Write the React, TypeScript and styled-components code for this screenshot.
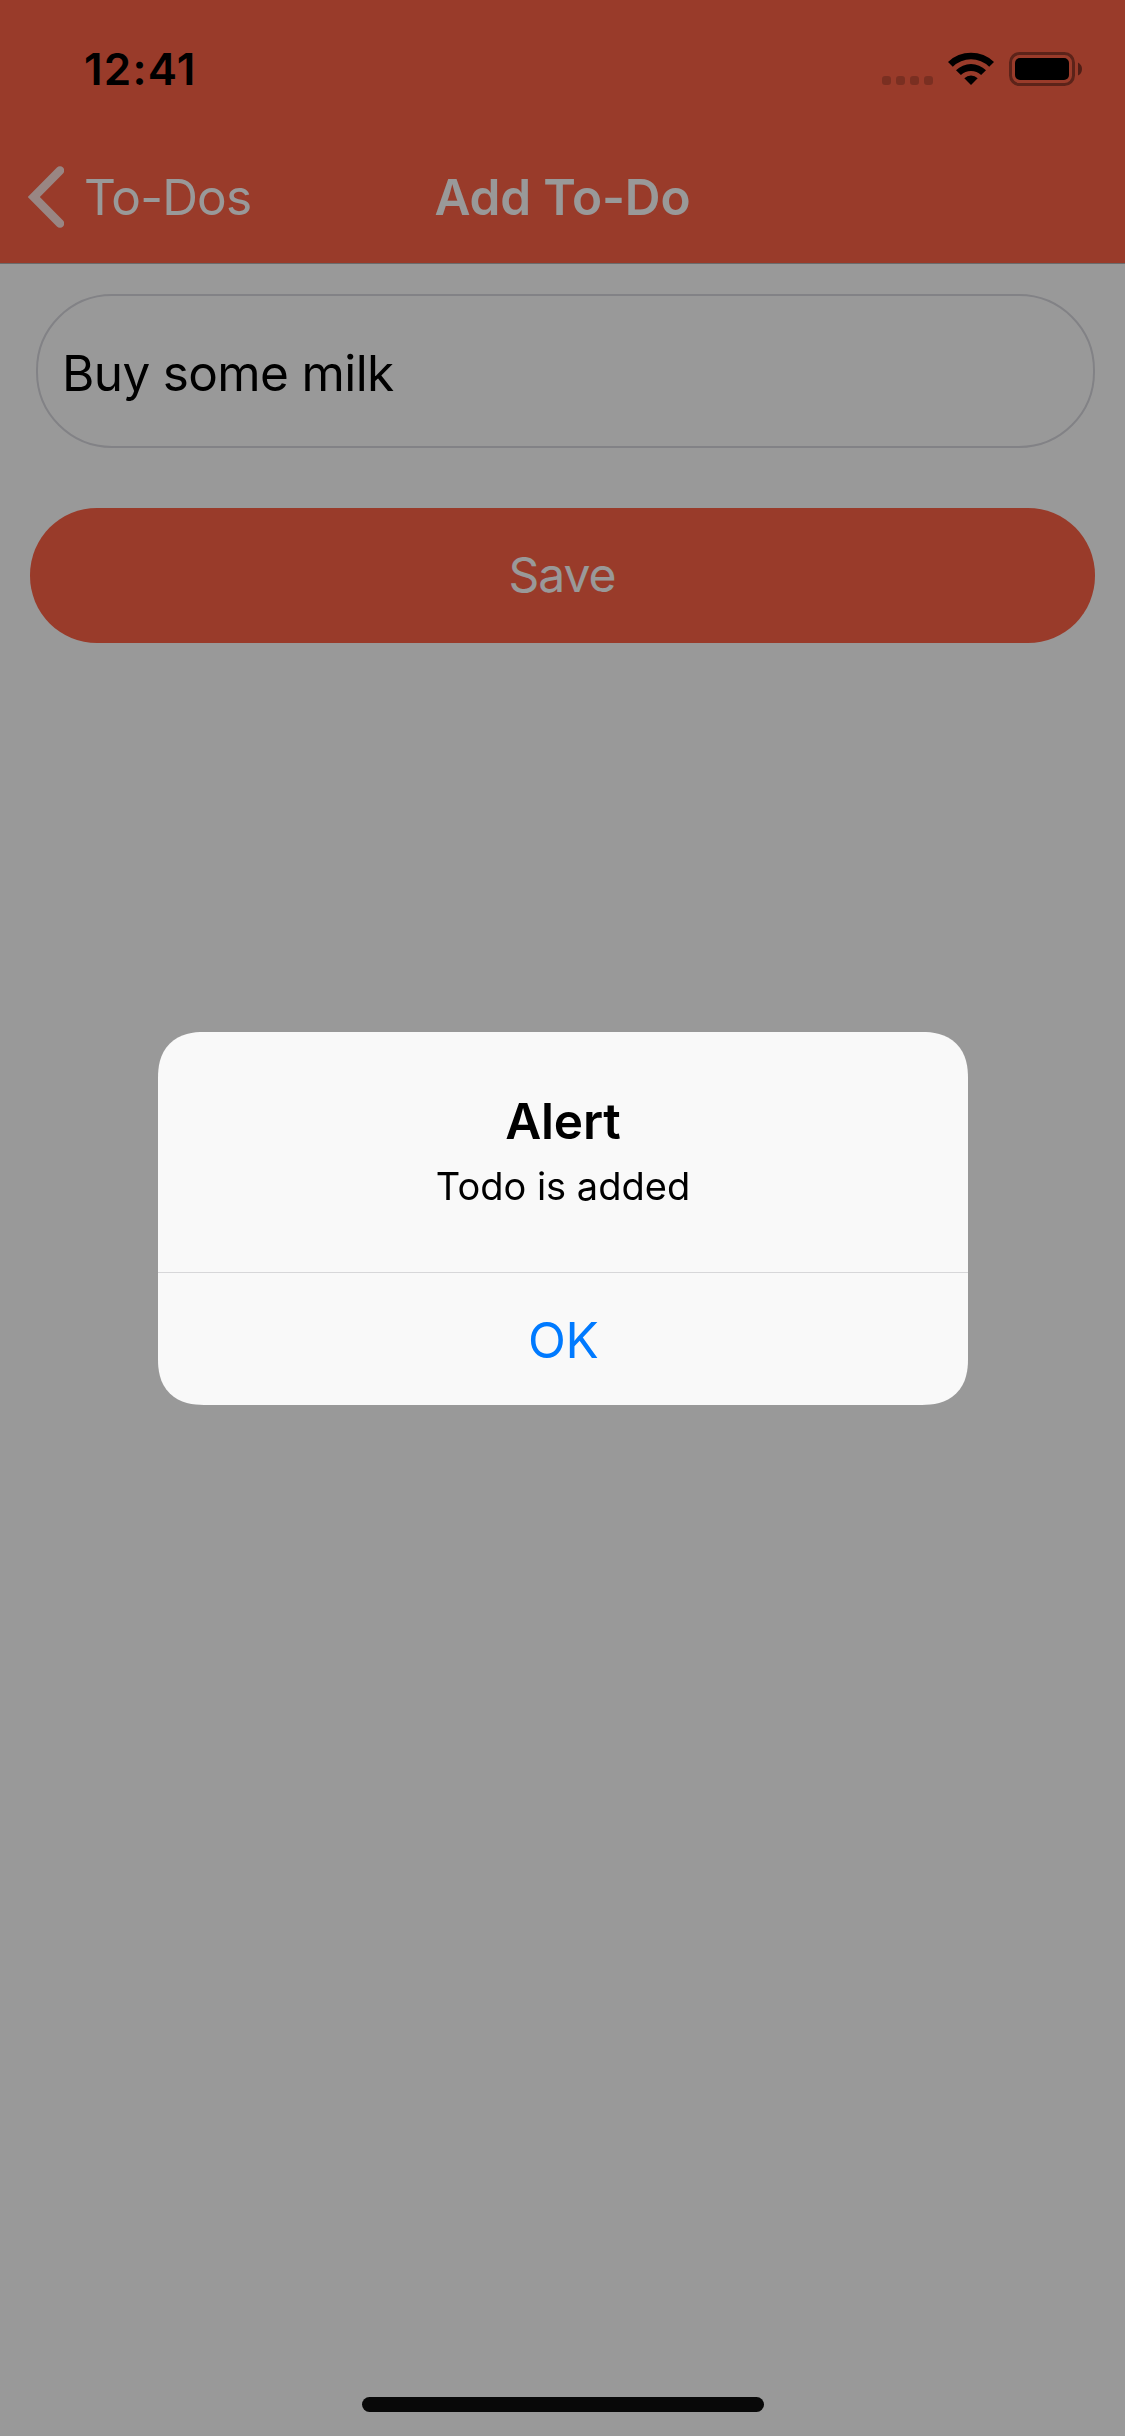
import React from "react";
import styled, { createGlobalStyle } from "styled-components";

const GlobalStyle = createGlobalStyle`
  *, *::before, *::after { box-sizing: border-box; }
  body {
    margin: 0;
    background: #fff;
    font-family: Inter, "Liberation Sans", sans-serif;
  }
  button, input { font-family: inherit; }
`;

const TOMATO = "#ff6347";

const Label = styled.span<{ $size: number; $track?: number; $weight?: number }>`
  font-size: ${(p) => p.$size}px;
  font-weight: ${(p) => p.$weight ?? 400};
  letter-spacing: ${(p) => p.$track ?? 0}px;
  margin-right: ${(p) => -(p.$track ?? 0)}px;
  line-height: 60px;
  white-space: nowrap;
`;

const Screen = styled.div`
  display: flex;
  flex-direction: column;
  width: 1125px;
  height: 2436px;
  background: #fff;
`;

const Header = styled.header`
  display: flex;
  flex-direction: column;
  height: 264px;
  background: ${TOMATO};
  border-bottom: 1px solid #b2b2b2;
`;

const StatusBar = styled.div`
  display: flex;
  justify-content: space-between;
  height: 132px;
  padding: 39px 43px 0 84px;
  color: #000;
`;

const StatusIcons = styled.div`
  display: flex;
  align-items: flex-start;
  padding-top: 13px;
`;

const SignalDots = styled.div`
  display: flex;
  gap: 5px;
  margin: 24px 15px 0 0;
`;

const Dot = styled.i`
  width: 9px;
  height: 9px;
  border-radius: 3px;
  background: rgba(0, 0, 0, 0.2);
`;

const WifiIcon = styled.svg`
  width: 46px;
  height: 34px;
  margin-right: 15px;
`;

const BatteryIcon = styled.svg`
  width: 73px;
  height: 34px;
`;

const NavBar = styled.nav`
  display: grid;
  grid-template-columns: 1fr auto 1fr;
  align-items: center;
  height: 131px;
  padding-bottom: 1px;
  color: #fff;
`;

const BackButton = styled.button`
  display: flex;
  align-items: center;
  gap: 20px;
  padding: 0 0 0 28px;
  border: 0;
  background: none;
  color: inherit;
`;

const Chevron = styled.svg`
  width: 36px;
  height: 62px;
`;

const Form = styled.form`
  display: flex;
  flex-direction: column;
  padding: 30px 30px 0;
`;

const TextField = styled.input`
  height: 154px;
  margin-left: 6px;
  padding: 3px 24px 0;
  border: 2px solid #d9d9df;
  border-radius: 76px;
  outline: none;
  background: transparent;
  color: #000;
  font-size: 49.5px;
  letter-spacing: -0.64px;
`;

const SaveButton = styled.button`
  display: flex;
  align-items: center;
  justify-content: center;
  height: 135px;
  margin-top: 60px;
  padding: 0 0 1px;
  border: 0;
  border-radius: 67px;
  background: ${TOMATO};
  color: #fff;
`;

const Backdrop = styled.div`
  position: fixed;
  inset: 0;
  display: flex;
  flex-direction: column;
  align-items: center;
  width: 1125px;
  height: 2436px;
  padding: 1032px 0 24px;
  background: rgba(0, 0, 0, 0.4);
`;

const Dialog = styled.div`
  display: flex;
  flex-direction: column;
  width: 810px;
  height: 373px;
  margin-left: 1px;
  border-radius: 46px;
  corner-shape: superellipse(1.25);
  background: #f9f9f9;
  color: #000;
`;

const DialogText = styled.div`
  display: flex;
  flex-direction: column;
  align-items: center;
  gap: 5px;
  height: 240px;
  padding-top: 59px;
`;

const DialogButton = styled.button`
  display: flex;
  align-items: center;
  justify-content: center;
  height: 133px;
  padding: 1px 0 0 1px;
  border: 0;
  border-top: 1px solid #d7d7d9;
  background: none;
  color: #007aff;
`;

const HomeIndicator = styled.div`
  width: 402px;
  height: 15px;
  margin: auto 0 0 1px;
  border-radius: 8px;
  background: #080808;
`;

export default function App() {
  return (
    <>
      <GlobalStyle />
      <Screen>
        <Header>
          <StatusBar>
            <Label $size={44} $weight={600} $track={1.2}>12:41</Label>
            <StatusIcons>
              <SignalDots>
                <Dot />
                <Dot />
                <Dot />
                <Dot />
              </SignalDots>
              <WifiIcon viewBox="0 0 46 34">
                <path d="M0 10A33 33 0 0 1 46 10L41.2 14.8A26 26 0 0 0 4.8 14.8Z" />
                <path d="M8 18.2A21.5 21.5 0 0 1 38 18.2L33.1 23A14.6 14.6 0 0 0 12.9 23Z" />
                <path d="M16.3 26.2A10 10 0 0 1 29.7 26.2L23 33Z" />
              </WifiIcon>
              <BatteryIcon viewBox="0 0 73 34">
                <rect x="1.5" y="1.5" width="63" height="31" rx="9" fill="none" stroke="#000" strokeOpacity="0.4" strokeWidth="3" />
                <rect x="6" y="6" width="54" height="22" rx="5" />
                <path d="M69 10.4C71.6 11.6 73 14.2 73 17S71.6 22.4 69 23.6Z" fillOpacity="0.48" />
              </BatteryIcon>
            </StatusIcons>
          </StatusBar>
          <NavBar>
            <BackButton type="button">
              <Chevron viewBox="0 0 36 62">
                <path
                  d="M32 4.5L5.8 31L32 57.5"
                  fill="none"
                  stroke="#fff"
                  strokeOpacity="0.8"
                  strokeWidth="8.6"
                  strokeLinecap="round"
                />
              </Chevron>
              <Label $size={49.5} $track={-0.79}>To-Dos</Label>
            </BackButton>
            <Label $size={49.5} $weight={600} $track={-0.16}>Add To-Do</Label>
          </NavBar>
        </Header>
        <Form>
          <TextField defaultValue="Buy some milk" />
          <SaveButton type="button">
            <Label $size={48} $track={-1}>Save</Label>
          </SaveButton>
        </Form>
      </Screen>
      <Backdrop>
        <Dialog role="alertdialog">
          <DialogText>
            <Label $size={49.5} $weight={600} $track={-0.2}>Alert</Label>
            <Label $size={38}>Todo is added</Label>
          </DialogText>
          <DialogButton type="button">
            <Label $size={49.5} $track={-0.35}>OK</Label>
          </DialogButton>
        </Dialog>
        <HomeIndicator />
      </Backdrop>
    </>
  );
}
